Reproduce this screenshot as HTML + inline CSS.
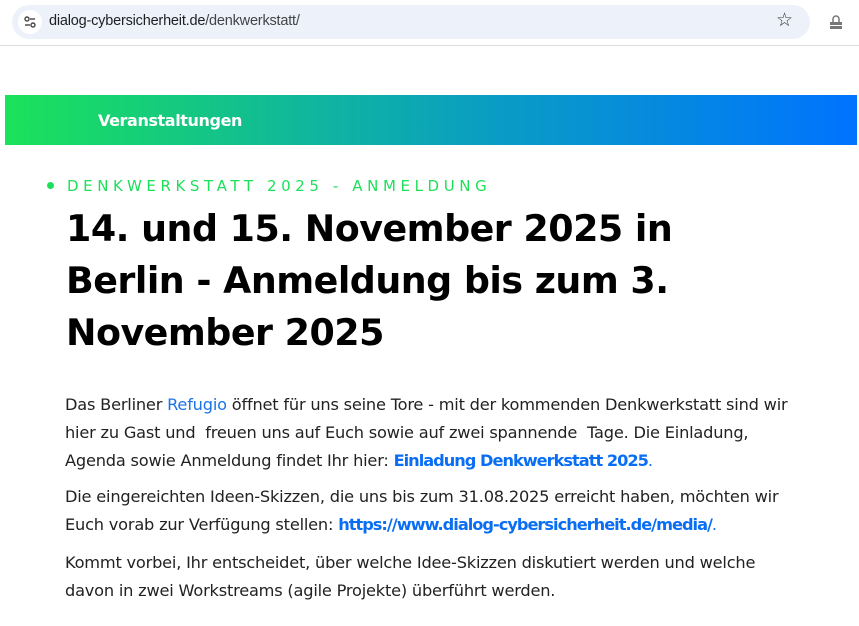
<!DOCTYPE html>
<html><head><meta charset="utf-8"><style>
*{margin:0;padding:0;box-sizing:border-box}
body{width:859px;height:626px;overflow:hidden;background:#fff;font-family:"DejaVu Sans","Liberation Sans",sans-serif;position:relative}
.bar{position:absolute;left:0;top:0;width:859px;height:46px;background:#fff;border-bottom:1px solid #dadce0}
.url{position:absolute;left:12px;top:5px;width:798px;height:34px;border-radius:17px;background:#edf2fa}
.url .ic{position:absolute;left:6px;top:5px;width:24px;height:24px;border-radius:12px;background:#fff}
.url .t{position:absolute;left:37px;top:8px;font-size:14.5px;color:#1f1f1f;letter-spacing:-0.2px;font-family:"Liberation Sans",sans-serif}
.star{position:absolute;left:776px;top:9px;font-size:19px;color:#333}
.lock{position:absolute;left:828px;top:14px;width:16px;height:16px}
.band{position:absolute;left:5px;top:95px;width:852px;height:50px;background:linear-gradient(90deg,#1be25a,#0a9fc0 55%,#0073ff)}
.band span{position:absolute;left:93px;top:16px;color:#fff;font-weight:bold;font-size:16px;letter-spacing:-0.4px}
.kick{position:absolute;left:67px;top:177px;color:#1de05a;font-size:15px;letter-spacing:4.6px}
.dot{position:absolute;left:47px;top:182px;width:7px;height:7px;border-radius:4px;background:#1de05a}
h1{position:absolute;left:66px;top:203px;font-size:36.4px;line-height:52px;font-weight:bold;color:#000;letter-spacing:-0.5px;white-space:nowrap}
.p{position:absolute;left:65px;font-size:16.2px;line-height:28px;color:#222;letter-spacing:-0.2px;white-space:nowrap}
a{color:#1a73e8;text-decoration:none}
a b{color:#0a6ef5;letter-spacing:-1px}
</style></head><body>
<div class="bar">
<div class="url"><div class="ic"><svg width="24" height="24"><circle cx="9" cy="9" r="2" fill="none" stroke="#444" stroke-width="1.4"/><line x1="12" y1="9" x2="17" y2="9" stroke="#444" stroke-width="1.4"/><circle cx="15" cy="15" r="2" fill="none" stroke="#444" stroke-width="1.4"/><line x1="7" y1="15" x2="12" y2="15" stroke="#444" stroke-width="1.4"/></svg></div><div class="t">dialog-cybersicherheit.de<span style="color:#444">/denkwerkstatt/</span></div></div>
<div class="star">☆</div>
<svg class="lock" viewBox="0 0 16 16"><path d="M5 8V5a3 3 0 0 1 6 0v3" fill="none" stroke="#777" stroke-width="1.5"/><rect x="2" y="8" width="12" height="3" fill="#777"/><rect x="2" y="12" width="12" height="3" fill="#777"/></svg>
</div>
<div class="band"><span>Veranstaltungen</span></div>
<div class="dot"></div>
<div class="kick">DENKWERKSTATT 2025 - ANMELDUNG</div>
<h1>14. und 15. November 2025 in<br>Berlin - Anmeldung bis zum 3.<br>November 2025</h1>
<div class="p" style="top:391px">Das Berliner <a>Refugio</a> öffnet für uns seine Tore - mit der kommenden Denkwerkstatt sind wir<br>hier zu Gast und &nbsp;freuen uns auf Euch sowie auf zwei spannende &nbsp;Tage. Die Einladung,<br>Agenda sowie Anmeldung findet Ihr hier: <a><b>Einladung Denkwerkstatt 2025</b>.</a></div>
<div class="p" style="top:483px">Die eingereichten Ideen-Skizzen, die uns bis zum 31.08.2025 erreicht haben, möchten wir<br>Euch vorab zur Verfügung stellen: <a><b>https://www.dialog-cybersicherheit.de/media/</b>.</a></div>
<div class="p" style="top:549px">Kommt vorbei, Ihr entscheidet, über welche Idee-Skizzen diskutiert werden und welche<br>davon in zwei Workstreams (agile Projekte) überführt werden.</div>
</body></html>
